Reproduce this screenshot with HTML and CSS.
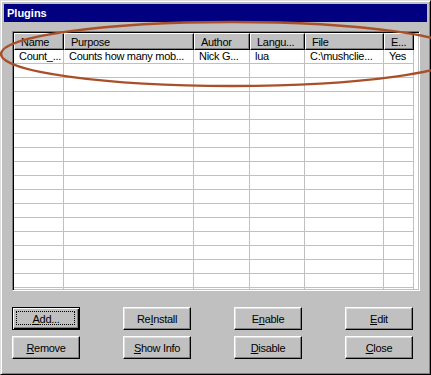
FILE: index.html
```html
<!DOCTYPE html>
<html lang="en">
<head>
    <meta charset="UTF-8">
    <title>Plugins</title>
    <link rel="stylesheet" href="styles.css">
</head>
<body>
    <div class="window">
        <div class="titlebar">Plugins</div>

        <div class="content">
            <div class="listview">
                <table class="plugins">
                    <thead>
                        <tr>
                            <th class="col-name">Name</th>
                            <th class="col-purpose">Purpose</th>
                            <th class="col-author">Author</th>
                            <th class="col-lang">Langu...</th>
                            <th class="col-file">File</th>
                            <th class="col-enabled">E...</th>
                        </tr>
                    </thead>
                    <tbody>
                        <tr>
                            <td>Count_...</td>
                            <td>Counts how many mob...</td>
                            <td>Nick G...</td>
                            <td>lua</td>
                            <td>C:\mushclie...</td>
                            <td>Yes</td>
                        </tr>
                        <tr><td></td><td></td><td></td><td></td><td></td><td></td></tr>
                        <tr><td></td><td></td><td></td><td></td><td></td><td></td></tr>
                        <tr><td></td><td></td><td></td><td></td><td></td><td></td></tr>
                        <tr><td></td><td></td><td></td><td></td><td></td><td></td></tr>
                        <tr><td></td><td></td><td></td><td></td><td></td><td></td></tr>
                        <tr><td></td><td></td><td></td><td></td><td></td><td></td></tr>
                        <tr><td></td><td></td><td></td><td></td><td></td><td></td></tr>
                        <tr><td></td><td></td><td></td><td></td><td></td><td></td></tr>
                        <tr><td></td><td></td><td></td><td></td><td></td><td></td></tr>
                        <tr><td></td><td></td><td></td><td></td><td></td><td></td></tr>
                        <tr><td></td><td></td><td></td><td></td><td></td><td></td></tr>
                        <tr><td></td><td></td><td></td><td></td><td></td><td></td></tr>
                        <tr><td></td><td></td><td></td><td></td><td></td><td></td></tr>
                        <tr><td></td><td></td><td></td><td></td><td></td><td></td></tr>
                        <tr><td></td><td></td><td></td><td></td><td></td><td></td></tr>
                        <tr><td></td><td></td><td></td><td></td><td></td><td></td></tr>
                        <tr><td></td><td></td><td></td><td></td><td></td><td></td></tr>
                    </tbody>
                </table>
            </div>

            <div class="buttons">
                <button class="btn default"><u>A</u>dd...</button>
                <button class="btn">Re<u>I</u>nstall</button>
                <button class="btn">E<u>n</u>able</button>
                <button class="btn"><u>E</u>dit</button>
                <button class="btn"><u>R</u>emove</button>
                <button class="btn"><u>S</u>how Info</button>
                <button class="btn"><u>D</u>isable</button>
                <button class="btn"><u>C</u>lose</button>
            </div>
        </div>
    </div>

    <!-- hand-drawn highlight round the first entry -->
    <svg class="annotation" viewBox="0 0 431 375">
        <ellipse cx="232" cy="54" rx="231" ry="32"></ellipse>
    </svg>
</body>
</html>
```

FILE: styles.css
```css
* {
    margin: 0;
    padding: 0;
    box-sizing: border-box;
}

body {
    width: 431px;
    height: 375px;
    overflow: hidden;
    position: relative;
    background: #c0c0c0;
    font-family: 'Liberation Sans', Arial, sans-serif;
    font-size: 11px;
    letter-spacing: -0.3px;
    color: #000;
}

.window {
    width: 431px;
    height: 375px;
    background: #c0c0c0;
    border: 1px solid;
    border-color: #dfdfdf #000 #000 #dfdfdf;
    box-shadow: inset 1px 1px #fff, inset -1px -1px #808080;
    padding: 3px;
}

.titlebar {
    height: 18px;
    background: #000080;
    color: #fff;
    font-weight: bold;
    letter-spacing: 0;
    line-height: 18px;
    padding-left: 3px;
}

.content {
    padding: 9px 0 0 8px;
}

.listview {
    width: 408px;
    height: 260px;
    background: #fff;
    border: 1px solid;
    border-color: #808080 #fff #fff #808080;
    box-shadow: inset 1px 1px #000, inset -1px -1px #c0c0c0;
    padding: 1px;
    overflow: hidden;
}

.plugins {
    table-layout: fixed;
    width: 400px;
    border-collapse: separate;
    border-spacing: 0;
}

.plugins th {
    height: 17px;
    background: #c0c0c0;
    font-weight: normal;
    text-align: left;
    padding: 0 0 0 6px;
    border: 1px solid;
    border-color: #fff #000 #000 #fff;
    box-shadow: inset -1px -1px #808080;
    white-space: nowrap;
    overflow: hidden;
}

.col-name { width: 50px; }
.col-purpose { width: 130px; }
.col-author { width: 56px; }
.col-lang { width: 55px; }
.col-file { width: 79px; }
.col-enabled { width: 30px; }

.plugins td {
    height: 14px;
    padding: 0 0 0 5px;
    border-right: 1px solid #c0c0c0;
    border-bottom: 1px solid #c0c0c0;
    white-space: nowrap;
    overflow: hidden;
    line-height: 13px;
}

.buttons {
    display: grid;
    grid-template-columns: repeat(4, 68px);
    column-gap: 43px;
    row-gap: 6px;
    margin-top: 16px;
}

.btn {
    position: relative;
    height: 23px;
    background: #c0c0c0;
    border: 1px solid;
    border-color: #fff #000 #000 #fff;
    box-shadow: inset -1px -1px #808080, inset 1px 1px #dfdfdf;
    font-family: inherit;
    font-size: 11px;
    letter-spacing: -0.3px;
    color: #000;
}

.btn.default {
    border-color: #000;
    box-shadow: inset 1px 1px #fff, inset -1px -1px #000, inset -2px -2px #808080;
}

.btn.default::after {
    content: '';
    position: absolute;
    top: 3px;
    left: 3px;
    right: 4px;
    bottom: 4px;
    border: 1px dotted #000;
}

.annotation {
    position: absolute;
    top: 0;
    left: 0;
    width: 431px;
    height: 375px;
    pointer-events: none;
}

.annotation ellipse {
    fill: none;
    stroke: #a9502a;
    stroke-width: 2.4;
}
```
